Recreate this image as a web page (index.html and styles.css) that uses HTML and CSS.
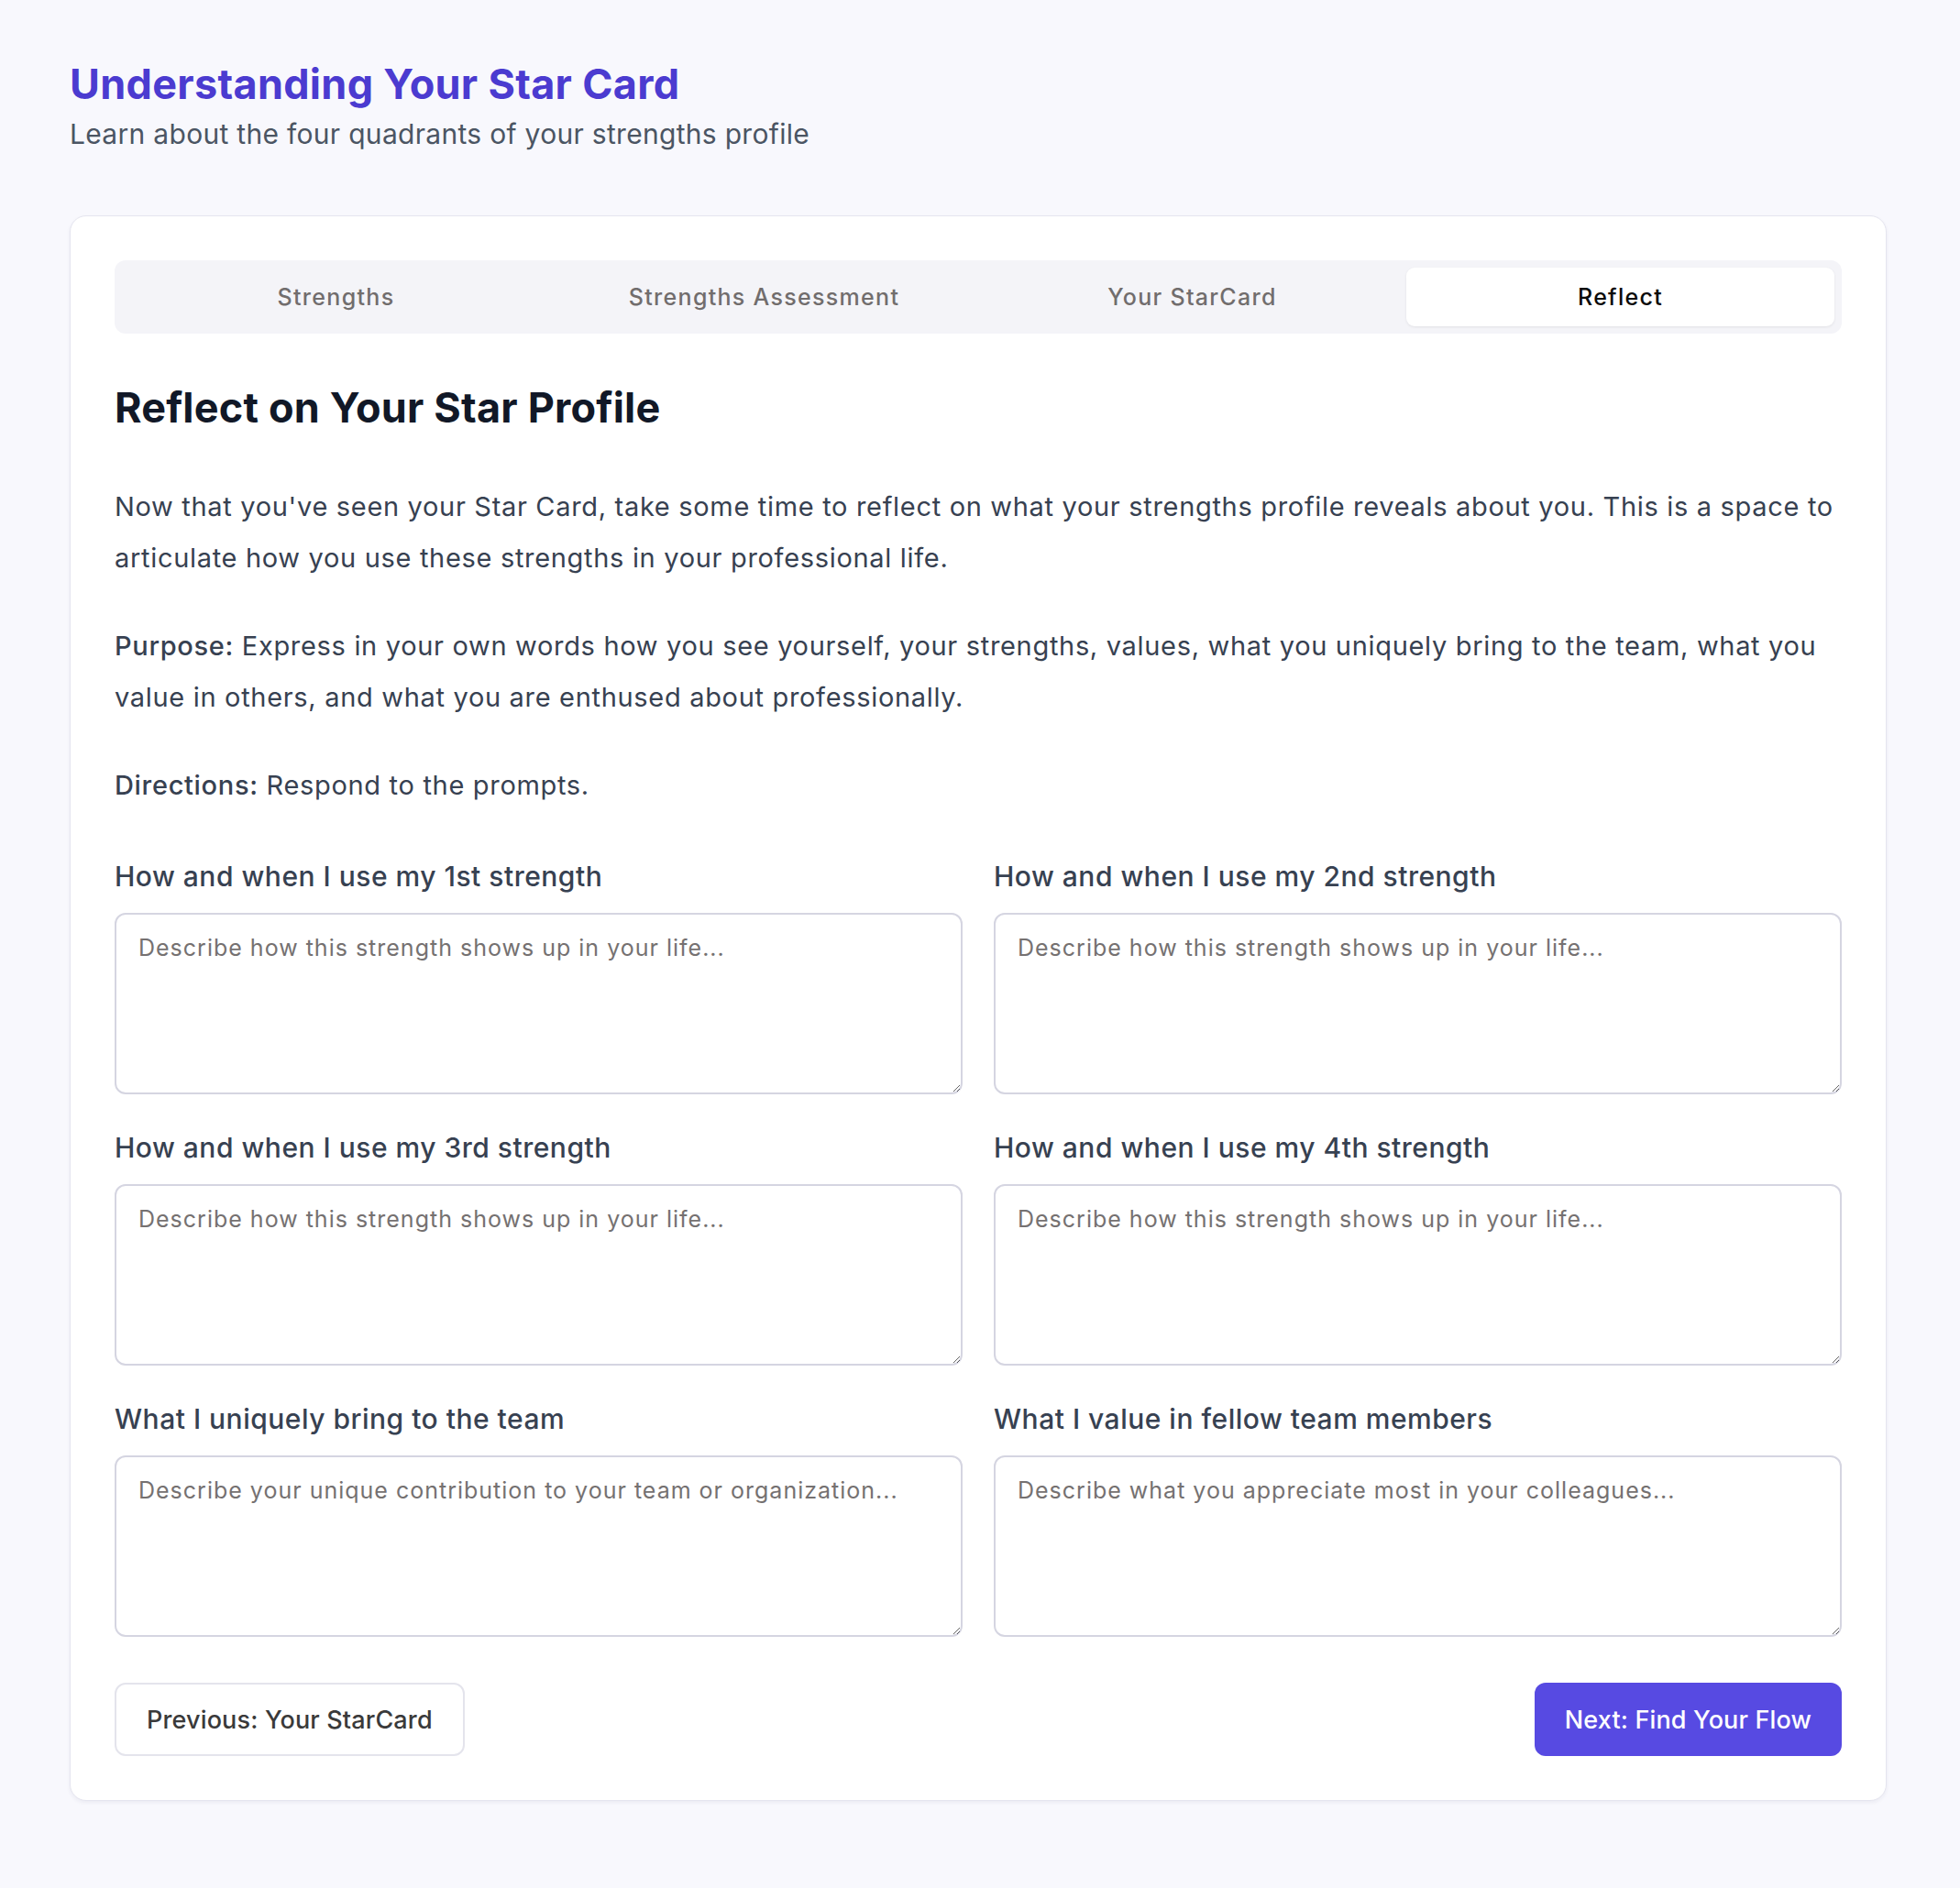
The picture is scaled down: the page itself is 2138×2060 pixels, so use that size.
FILE: index.html
```html
<!DOCTYPE html>
<html lang="en">
<head>
<meta charset="utf-8">
<title>Understanding Your Star Card</title>
<link rel="stylesheet" href="styles.css">
</head>
<body>
<main class="page">
  <header class="page-header">
    <h1 class="page-title">Understanding Your Star Card</h1>
    <p class="page-subtitle">Learn about the four quadrants of your strengths profile</p>
  </header>

  <section class="card">
    <nav class="tabs">
      <button class="tab">Strengths</button>
      <button class="tab">Strengths Assessment</button>
      <button class="tab">Your StarCard</button>
      <button class="tab tab-active">Reflect</button>
    </nav>

    <h2 class="section-title">Reflect on Your Star Profile</h2>

    <p class="text">Now that you've seen your Star Card, take some time to reflect on what your strengths profile reveals about you. This is a space to articulate how you use these strengths in your professional life.</p>
    <p class="text"><strong>Purpose:</strong> Express in your own words how you see yourself, your strengths, values, what you uniquely bring to the team, what you value in others, and what you are enthused about professionally.</p>
    <p class="text"><strong>Directions:</strong> Respond to the prompts.</p>

    <div class="fields">
      <label class="field">
        <span class="field-label">How and when I use my 1st strength</span>
        <textarea class="field-input" placeholder="Describe how this strength shows up in your life..."></textarea>
      </label>
      <label class="field">
        <span class="field-label">How and when I use my 2nd strength</span>
        <textarea class="field-input" placeholder="Describe how this strength shows up in your life..."></textarea>
      </label>
      <label class="field">
        <span class="field-label">How and when I use my 3rd strength</span>
        <textarea class="field-input" placeholder="Describe how this strength shows up in your life..."></textarea>
      </label>
      <label class="field">
        <span class="field-label">How and when I use my 4th strength</span>
        <textarea class="field-input" placeholder="Describe how this strength shows up in your life..."></textarea>
      </label>
      <label class="field">
        <span class="field-label">What I uniquely bring to the team</span>
        <textarea class="field-input" placeholder="Describe your unique contribution to your team or organization..."></textarea>
      </label>
      <label class="field">
        <span class="field-label">What I value in fellow team members</span>
        <textarea class="field-input" placeholder="Describe what you appreciate most in your colleagues..."></textarea>
      </label>
    </div>

    <div class="actions">
      <button class="btn btn-outline">Previous: Your StarCard</button>
      <button class="btn btn-primary">Next: Find Your Flow</button>
    </div>
  </section>
</main>
</body>
</html>
```

FILE: styles.css
```css
* {
  box-sizing: border-box;
}

html, body {
  margin: 0;
  padding: 0;
}

body {
  background: #f8f8fd;
  font-family: "Inter", "Liberation Sans", sans-serif;
  color: #374151;
}

.page {
  padding: 65px 80px 95px 76px;
}

.page-title {
  margin: 0;
  font-size: 45px;
  line-height: 54px;
  font-weight: 700;
  color: #4b3bd0;
  letter-spacing: 0.3px;
}

.page-subtitle {
  margin: 6px 0 0;
  font-size: 30px;
  line-height: 42px;
  color: #4b5563;
  letter-spacing: 0.3px;
}

.card {
  margin-top: 68px;
  background: #ffffff;
  border: 1px solid #e5e5ef;
  border-radius: 18px;
  box-shadow: 0 2px 4px rgba(30, 30, 80, 0.06);
  padding: 48px;
}

.tabs {
  display: grid;
  grid-template-columns: repeat(4, 1fr);
  background: #f4f4f8;
  border-radius: 12px;
  padding: 8px;
  height: 80px;
}

.tab {
  border: none;
  background: transparent;
  font-family: inherit;
  font-size: 25px;
  font-weight: 500;
  letter-spacing: 1.3px;
  color: #716d6d;
  border-radius: 9px;
  padding: 0;
}

.tab-active {
  background: #ffffff;
  color: #0b0b0b;
  box-shadow: 0 1px 3px rgba(0, 0, 0, 0.08);
}

.section-title {
  margin: 54px 0 0;
  font-size: 45px;
  line-height: 54px;
  font-weight: 700;
  color: #111827;
  letter-spacing: 0.2px;
}

.text {
  margin: 40px 0 0;
  font-size: 29px;
  line-height: 56px;
  letter-spacing: 0.68px;
  color: #374151;
}

.section-title + .text {
  margin-top: 53px;
}

.text strong {
  font-weight: 500;
}

.fields {
  margin-top: 50px;
  display: grid;
  grid-template-columns: 1fr 1fr;
  column-gap: 34px;
  row-gap: 37px;
}

.field {
  display: flex;
  flex-direction: column;
}

.field-label {
  font-size: 30px;
  line-height: 42px;
  font-weight: 500;
  letter-spacing: 0.5px;
  color: #374151;
  margin-bottom: 19px;
}

.field-input {
  height: 198px;
  border: 2px solid #d5d5e1;
  border-radius: 12px;
  padding: 18px 24px;
  font-family: inherit;
  font-size: 25px;
  line-height: 36px;
  letter-spacing: 1px;
  color: #111827;
  background: #ffffff;
  resize: vertical;
}

.field-input::placeholder {
  color: #757171;
}

.actions {
  margin-top: 50px;
  display: flex;
  justify-content: space-between;
}

.btn {
  height: 80px;
  border-radius: 12px;
  font-family: inherit;
  font-size: 27px;
  font-weight: 500;
  letter-spacing: 0.15px;
  padding: 0 33px;
}

.btn-outline {
  background: #ffffff;
  border: 2px solid #e4e4ec;
  color: #3a3a3a;
}

.btn-primary {
  background: #574ae2;
  border: none;
  color: #ffffff;
}
```
